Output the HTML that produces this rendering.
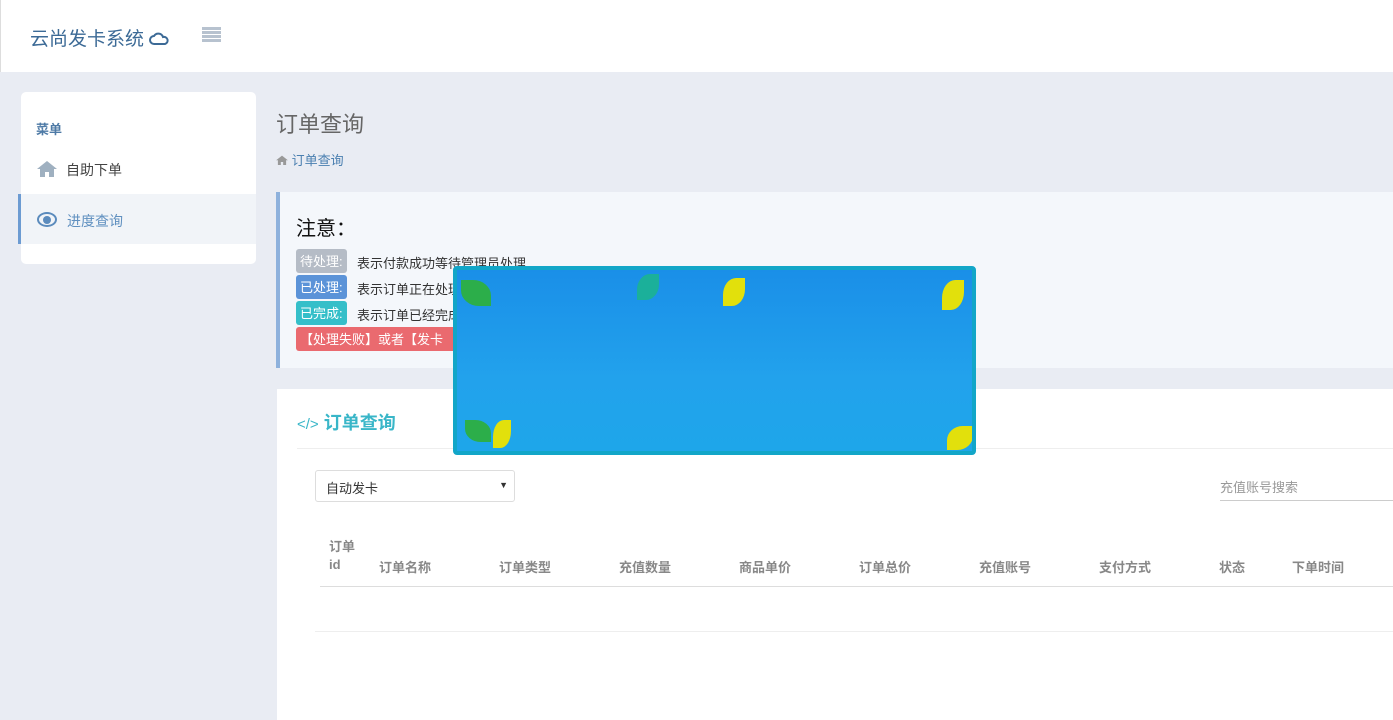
<!DOCTYPE html>
<html><head><meta charset="utf-8"><style>
*{margin:0;padding:0;box-sizing:border-box}
body{width:1393px;height:720px;overflow:hidden;background:#e9ecf3;font-family:"Liberation Sans","Noto Sans CJK SC",sans-serif;position:relative;font-size:13px;color:#333}
.abs{position:absolute}
.top{left:0;top:0;width:1393px;height:72px;background:#fff;border-left:1px solid #ddd}
.side{left:21px;top:92px;width:235px;height:172px;background:#fff;border-radius:5px}
.badge{position:absolute;left:296px;height:24px;line-height:26px;color:#fff;padding:0 4px;border-radius:3px;font-size:13px}
.th{position:absolute;top:557px;font-size:13px;font-weight:bold;color:#888}
</style></head><body>
<div class="abs top">
 <div class="abs" style="left:29px;top:24px;font-size:19px;color:#3c6a96">云尚发卡系统 <svg width="22" height="14" viewBox="0 0 22 14" style="vertical-align:-1px"><path d="M5 12a4 4 0 0 1 0-8a5 5 0 0 1 9 1a3.5 3.5 0 0 1 2 7z" fill="none" stroke="#3c6a96" stroke-width="2"/></svg></div>
 <div class="abs" style="left:201px;top:27px;width:19px;height:15px;background:repeating-linear-gradient(#b7c2cf 0 3px,transparent 3px 4px)"></div>
</div>
<div class="abs side">
 <svg class="abs" style="left:16px;top:68px" width="20" height="17" viewBox="0 0 20 17"><path d="M10 1L0 9h3v8h5v-5h4v5h5V9h3z" fill="#9fb0c0"/></svg>
 <div class="abs" style="left:15px;top:27px;font-size:13px;font-weight:bold;color:#4e7aa6">菜单</div>
 <div class="abs" style="left:45px;top:68px;font-size:14px;color:#444">自助下单</div>
 <div class="abs" style="left:-3px;top:102px;width:238px;height:50px;background:#f1f4f8;border-left:3px solid #6c9bd2"></div>
 <div class="abs" style="left:16px;top:120px;width:20px;height:15px;border:2.5px solid #5b8bbd;border-radius:50%"></div>
 <div class="abs" style="left:22px;top:124px;width:8px;height:8px;background:#5b8bbd;border-radius:50%"></div>
 <div class="abs" style="left:46px;top:119px;font-size:14px;color:#6090c0">进度查询</div>
</div>
<div class="abs" style="left:276px;top:107px;font-size:22px;color:#666">订单查询</div>
<div class="abs" style="left:276px;top:150px;font-size:13px;color:#4a7fb0"><svg width="12" height="10" viewBox="0 0 20 17"><path d="M10 1L0 9h3v8h5v-5h4v5h5V9h3z" fill="#999"/></svg> 订单查询</div>
<div class="abs" style="left:276px;top:192px;width:1117px;height:176px;background:#f4f7fb;border-left:4px solid #8eb1dc"></div>
<div class="abs" style="left:296px;top:212px;font-size:20px;color:#111">注意：</div>
<div class="badge" style="top:249px;background:#b5bcc6">待处理:</div>
<div class="abs" style="left:357px;top:253px;font-size:13px">表示付款成功等待管理员处理</div>
<div class="badge" style="top:275px;background:#5b93d8">已处理:</div>
<div class="abs" style="left:357px;top:279px;font-size:13px">表示订单正在处理</div>
<div class="badge" style="top:301px;background:#35bfc9">已完成:</div>
<div class="abs" style="left:357px;top:305px;font-size:13px">表示订单已经完成</div>
<div class="badge" style="top:327px;background:#ea6a6f;width:170px">【处理失败】或者【发卡</div>
<div class="abs" style="left:277px;top:389px;width:1116px;height:331px;background:#fff"></div>
<div class="abs" style="left:297px;top:409px;font-size:18px;font-weight:bold;color:#39b6c8"><span style="font-weight:normal;font-size:15px">&lt;/&gt;</span> 订单查询</div>
<div class="abs" style="left:297px;top:448px;width:1096px;height:1px;background:#eee"></div>
<div class="abs" style="left:315px;top:470px;width:200px;height:32px;border:1px solid #ddd;border-radius:3px;padding:7px 10px;font-size:13px">自动发卡<span style="position:absolute;right:6px;top:9px;font-size:9px">▼</span></div>
<div class="abs" style="left:1220px;top:477px;font-size:13px;color:#999">充值账号搜索</div>
<div class="abs" style="left:1220px;top:500px;width:173px;height:1px;background:#ccc"></div>
<div class="th" style="left:329px;top:536px">订单</div>
<div class="th" style="left:329px">id</div>
<div class="th" style="left:379px">订单名称</div>
<div class="th" style="left:499px">订单类型</div>
<div class="th" style="left:619px">充值数量</div>
<div class="th" style="left:739px">商品单价</div>
<div class="th" style="left:859px">订单总价</div>
<div class="th" style="left:979px">充值账号</div>
<div class="th" style="left:1099px">支付方式</div>
<div class="th" style="left:1219px">状态</div>
<div class="th" style="left:1292px">下单时间</div>
<div class="abs" style="left:320px;top:586px;width:1073px;height:1px;background:#ddd"></div>
<div class="abs" style="left:315px;top:631px;width:1078px;height:1px;background:#eee"></div>
<div class="abs" style="left:453px;top:266px;width:523px;height:189px;background:linear-gradient(#1a8fe8,#22a2ec 60%,#1ea6ea);border:4px solid #12a6c8;border-radius:4px;overflow:hidden">
 <div class="abs" style="left:4px;top:10px;width:30px;height:26px;background:#2cae4a;border-radius:0 60% 0 60%"></div>
 <div class="abs" style="left:180px;top:4px;width:22px;height:26px;background:#1bb09a;border-radius:60% 0 60% 0"></div>
 <div class="abs" style="left:266px;top:8px;width:22px;height:28px;background:#e2e00c;border-radius:60% 0 60% 0"></div>
 <div class="abs" style="left:485px;top:10px;width:22px;height:30px;background:#e2e00c;border-radius:60% 0 60% 0"></div>
 <div class="abs" style="left:8px;top:150px;width:26px;height:22px;background:#2cae4a;border-radius:0 60% 0 60%"></div>
 <div class="abs" style="left:36px;top:150px;width:18px;height:28px;background:#e2e00c;border-radius:60% 0 60% 0"></div>
 <div class="abs" style="left:490px;top:156px;width:26px;height:24px;background:#e2e00c;border-radius:60% 0 60% 0"></div>
</div>
</body></html>
